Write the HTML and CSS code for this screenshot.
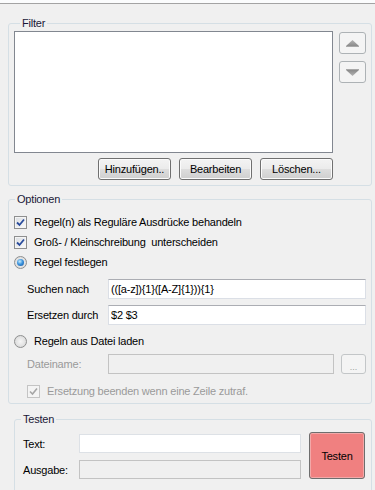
FILE: index.html
```html
<!DOCTYPE html>
<html lang="de">
<head>
  <meta charset="UTF-8" />
  <title>Umbenennen - Regeln</title>
  <link rel="stylesheet" href="styles.css">
</head>
<body>
  <div class="topbar"></div>

  <fieldset class="group group-filter">
    <legend>Filter</legend>
    <div class="filter-main">
      <div class="listbox"></div>
      <div class="move-buttons">
        <button class="move-btn" disabled>
          <svg width="13" height="7" viewBox="0 0 13 7"><defs><linearGradient id="gu" x1="0" y1="0" x2="0" y2="1"><stop offset="0" stop-color="#b4b4b4"/><stop offset="1" stop-color="#8a8a8a"/></linearGradient></defs><polygon points="6.5,0 13,6 0,6" fill="url(#gu)"/><rect x="0" y="6" width="13" height="1" fill="#a8a8a8"/></svg>
        </button>
        <button class="move-btn" disabled>
          <svg width="13" height="7" viewBox="0 0 13 7"><defs><linearGradient id="gd" x1="0" y1="0" x2="0" y2="1"><stop offset="0" stop-color="#8a8a8a"/><stop offset="1" stop-color="#b4b4b4"/></linearGradient></defs><rect x="0" y="0" width="13" height="1" fill="#a8a8a8"/><polygon points="0,1 13,1 6.5,7" fill="url(#gd)"/></svg>
        </button>
      </div>
    </div>
    <div class="filter-actions">
      <button class="btn">Hinzufügen..</button>
      <button class="btn">Bearbeiten</button>
      <button class="btn">Löschen...</button>
    </div>
  </fieldset>

  <fieldset class="group group-options">
    <legend>Optionen</legend>
    <div class="opt-list">
      <label class="opt-row">
        <span class="check checked"><svg width="9" height="9" viewBox="0 0 9 9"><path d="M1 4.5 L3.5 7 L8 1.5" fill="none" stroke="#2a4c9c" stroke-width="1.8"/></svg></span>
        Regel(n) als Reguläre Ausdrücke behandeln
      </label>
      <label class="opt-row">
        <span class="check checked"><svg width="9" height="9" viewBox="0 0 9 9"><path d="M1 4.5 L3.5 7 L8 1.5" fill="none" stroke="#2a4c9c" stroke-width="1.8"/></svg></span>
        Groß- / Kleinschreibung&nbsp; unterscheiden
      </label>
      <label class="opt-row">
        <span class="radio checked"></span>
        Regel festlegen
      </label>

      <div class="field-row first-field">
        <span class="field-label">Suchen nach</span>
        <input class="textbox wide" type="text" value="(([a-z]){1}([A-Z]{1})){1}" />
      </div>
      <div class="field-row">
        <span class="field-label">Ersetzen durch</span>
        <input class="textbox wide" type="text" value="$2 $3" />
      </div>

      <label class="opt-row radio-row">
        <span class="radio"></span>
        Regeln aus Datei laden
      </label>

      <div class="field-row file-row">
        <span class="field-label disabled">Dateiname:</span>
        <input class="textbox file-input" type="text" disabled />
        <button class="browse-btn" disabled>...</button>
      </div>

      <label class="opt-row sub-check disabled">
        <span class="check checked off"><svg width="9" height="9" viewBox="0 0 9 9"><path d="M1 4.5 L3.5 7 L8 1.5" fill="none" stroke="#a6a6a6" stroke-width="1.6"/></svg></span>
        Ersetzung beenden wenn eine Zeile zutraf.
      </label>
    </div>
  </fieldset>

  <fieldset class="group group-test">
    <legend>Testen</legend>
    <div class="test-grid">
      <span class="test-label">Text:</span>
      <input class="textbox test-input" type="text" />
      <button class="test-btn">Testen</button>
      <span class="test-label">Ausgabe:</span>
      <input class="textbox test-input" type="text" disabled />
    </div>
  </fieldset>
</body>
</html>
```

FILE: styles.css
```css
body {
  margin: 0;
  background-color: #f0f0f0;
  font-family: "Liberation Sans", Arial, sans-serif;
  font-size: 11px;
  letter-spacing: -0.2px;
  color: #000;
  width: 375px;
  overflow: hidden;
}
.topbar {
  height: 3px;
  background-color: #fbfcfd;
  border-bottom: 1px solid #a3a3a3;
}

/* group boxes */
.group {
  border: 1px solid #d5dfe5;
  border-radius: 3px;
  padding: 0;
  margin: 0 3px 0 8px;
  min-width: 0;
}
.group legend {
  line-height: 13px;
  padding: 0 2px;
  margin-left: 6px;
  color: #1a1838;
}
.group-filter {
  margin-top: 13px;
  padding: 0 38px 5px 5px;
}
.group-options {
  margin-top: 7px;
}
.group-test {
  margin-top: 9px;
  margin-left: 14px;
}

/* filter */
.filter-main {
  display: flex;
  gap: 6px;
  padding-top: 1px;
  margin-right: -33px;
}
.listbox {
  width: 318px;
  height: 120px;
  background: #fff;
  border: 1px solid #828790;
}
.move-buttons {
  display: flex;
  flex-direction: column;
  gap: 7px;
  margin-top: 1px;
}
.move-btn {
  width: 27px;
  height: 22px;
  padding: 0;
  border: 1px solid #adb2b5;
  border-radius: 3px;
  background: #f4f4f4;
  display: flex;
  align-items: center;
  justify-content: center;
}
.filter-actions {
  display: flex;
  justify-content: flex-end;
  gap: 8px;
  margin-top: 5px;
}
.btn {
  width: 73px;
  height: 22px;
  padding: 0;
  font: inherit;
  letter-spacing: inherit;
  color: #000;
  border: 1px solid #707070;
  border-radius: 3px;
  background: linear-gradient(to bottom, #f3f3f3 0%, #ebebeb 50%, #dddddd 51%, #cfcfcf 100%);
  box-shadow: inset 0 0 0 1px #fbfbfb;
}

/* options */
.opt-list {
  padding: 6px 5px 2px 5px;
}
.opt-row {
  display: flex;
  align-items: center;
  height: 20px;
}
.check {
  width: 11px;
  height: 11px;
  border: 1px solid #8e8f8f;
  background: linear-gradient(135deg, #d9dce0, #fbfbfb);
  box-shadow: inset 0 0 0 1px #f4f4f4;
  margin-right: 7px;
  display: flex;
  align-items: center;
  justify-content: center;
  flex: none;
}
.check.off {
  border-color: #c4c4c4;
  background: #f4f4f4;
}
.radio {
  width: 11px;
  height: 11px;
  border: 1px solid #8e8f8f;
  border-radius: 50%;
  background: radial-gradient(circle at 50% 50%, #f6f6f6 0%, #e3e3e3 55%, #d2d2d2 100%);
  margin-right: 7px;
  display: flex;
  align-items: center;
  justify-content: center;
  flex: none;
}
.radio.checked::after {
  content: "";
  width: 7px;
  height: 7px;
  border-radius: 50%;
  background: radial-gradient(circle at 40% 35%, #c9ecfc 0%, #3d95de 45%, #0f4f9c 100%);
}
.field-row {
  display: flex;
  align-items: center;
  height: 20px;
  padding-left: 13px;
  margin-top: 6px;
}
.first-field {
  margin-top: 7px;
}
.field-label {
  width: 81px;
  flex: none;
}
.disabled,
.field-label.disabled {
  color: #9a9a9a;
}
.textbox {
  height: 20px;
  box-sizing: border-box;
  font: inherit;
  letter-spacing: inherit;
  color: #000;
  padding: 0 2px;
  background: #fff;
  border: 1px solid #dbdfe6;
  border-top-color: #abadb3;
  outline: none;
}
.textbox.wide {
  width: 258px;
}
.textbox:disabled {
  background: #f0f0f0;
  border-color: #c3c3c3;
}
.radio-row {
  margin-top: 6px;
}
.file-row {
  margin-top: 3px;
}
.file-input {
  width: 226px;
}
.browse-btn {
  width: 25px;
  height: 20px;
  margin-left: 7px;
  padding: 0;
  font: inherit;
  font-size: 9px;
  line-height: 9px;
  color: #a0a0a0;
  border: 1px solid #c3c6c8;
  border-radius: 3px;
  background: #f4f4f4;
  padding-top: 6px;
}
.sub-check {
  padding-left: 13px;
  margin-top: 7px;
}

/* test */
.test-grid {
  display: grid;
  grid-template-columns: 56px 230px 56px;
  grid-template-rows: 19px 19px;
  row-gap: 7px;
  align-items: center;
  padding: 8px 5px 20px 8px;
}
.test-input {
  width: 222px;
  height: 19px;
  border-color: #dde1e6;
}
.test-btn {
  grid-column: 3;
  grid-row: 1 / span 2;
  align-self: start;
  margin-top: -2px;
  width: 56px;
  height: 47px;
  padding: 0;
  font: inherit;
  letter-spacing: inherit;
  color: #000;
  background: #f08080;
  border: 1px solid #6e6e6e;
  border-radius: 3px;
  box-shadow: inset 0 0 0 1px #f3a8a8;
}
```
